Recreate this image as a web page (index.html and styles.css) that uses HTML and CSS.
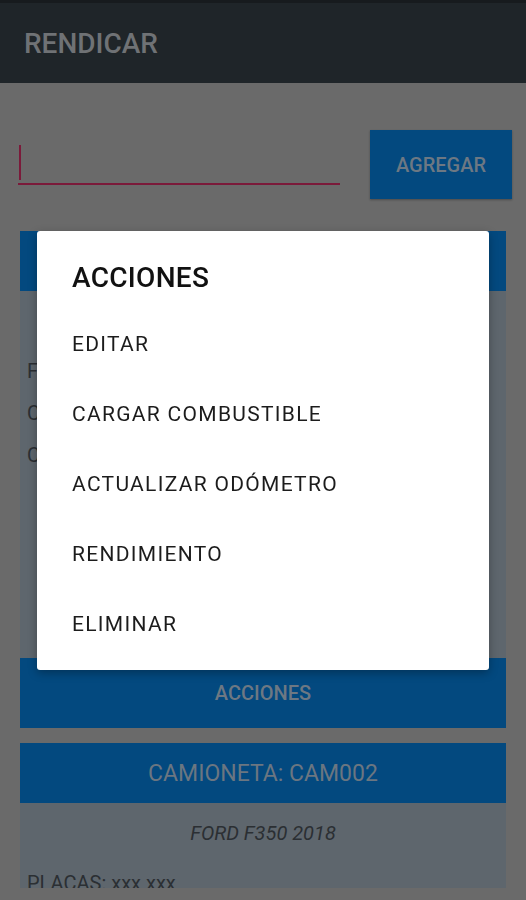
FILE: index.html
```html
<!DOCTYPE html>
<html lang="es">
<head>
    <meta charset="UTF-8">
    <meta name="viewport" content="width=device-width, initial-scale=1.0">
    <title>Rendicar</title>
    <link rel="stylesheet" href="styles.css">
</head>
<body>

<header class="appbar">
    <h1>RENDICAR</h1>
</header>

<main class="content">
    <div class="add-row">
        <div class="field"><span class="caret"></span></div>
        <button class="btn">AGREGAR</button>
    </div>

    <section class="card">
        <div class="card-head">CAMIONETA: CAM001</div>
        <div class="card-body tall">
            <p class="model">NISSAN NP300 2017</p>
            <p class="row">FECHA: 01/01/2019</p>
            <p class="row">COMBUSTIBLE: 0 L</p>
            <p class="row">CONSUMO: 0 KM/L</p>
        </div>
        <button class="card-action">ACCIONES</button>
    </section>

    <section class="card">
        <div class="card-head">CAMIONETA: CAM002</div>
        <div class="card-body">
            <p class="model">FORD F350 2018</p>
            <p class="row">PLACAS: xxx xxx</p>
            <p class="row">COMBUSTIBLE: DIESEL</p>
        </div>
        <button class="card-action">ACCIONES</button>
    </section>
</main>

<!-- dialogo de acciones abierto sobre la lista -->
<div class="dialog">
    <h2>ACCIONES</h2>
    <ul class="dialog-list">
        <li>EDITAR</li>
        <li>CARGAR COMBUSTIBLE</li>
        <li>ACTUALIZAR ODÓMETRO</li>
        <li>RENDIMIENTO</li>
        <li>ELIMINAR</li>
    </ul>
</div>

</body>
</html>
```

FILE: styles.css
```css
body {
    font-family: Roboto, "Liberation Sans", sans-serif;
    background-color: #6a6a6a;
    margin: 0;
    padding: 0;
    width: 526px;
    height: 900px;
    overflow: hidden;
}

.appbar {
    height: 83px;
    background-color: #1f2529;
    border-top: 3px solid #171b1e;
    box-sizing: border-box;
    display: flex;
    align-items: center;
    padding-left: 24px;
}

.appbar h1 {
    margin: 0;
    font-size: 28px;
    font-weight: 500;
    color: #6f7275;
}

.content {
    height: 805px;
    overflow: hidden;
}

.add-row {
    display: flex;
    align-items: flex-start;
    padding: 47px 14px 0 18px;
}

.field {
    width: 322px;
    height: 38px;
    margin-top: 15px;
    border-bottom: 2px solid #7b1a3a;
    position: relative;
    margin-right: 30px;
}

.caret {
    position: absolute;
    left: 1px;
    top: 0;
    width: 2px;
    height: 35px;
    background-color: #7b1a3a;
}

.btn {
    width: 142px;
    height: 69px;
    border: none;
    background-color: #03497f;
    color: #6d7883;
    font-family: inherit;
    font-size: 20px;
    font-weight: 500;
    padding: 0;
    box-shadow: 0 1px 2px rgba(0, 0, 0, 0.3);
}

.card {
    margin: 32px 20px 0 20px;
}

.card + .card {
    margin-top: 15px;
}

.card-head {
    height: 60px;
    background-color: #03497f;
    color: #6b7681;
    font-size: 23px;
    display: flex;
    align-items: center;
    justify-content: center;
}

.card-body {
    background-color: #5e666d;
    padding: 18px 7px 14px 7px;
    color: #2b2f33;
    font-size: 20px;
}

.card-body.tall {
    min-height: 367px;
    box-sizing: border-box;
}

.card-body p {
    margin: 0;
}

.card-body .model {
    text-align: center;
    font-style: italic;
    line-height: 24px;
    margin-bottom: 17px;
}

.card-body .row {
    line-height: 42px;
}

.card-action {
    display: block;
    width: 100%;
    height: 70px;
    border: none;
    background-color: #03497f;
    color: #6d7883;
    font-family: inherit;
    font-size: 20px;
    font-weight: 500;
    padding: 0;
}

.dialog {
    position: fixed;
    left: 37px;
    top: 231px;
    width: 452px;
    height: 439px;
    box-sizing: border-box;
    background-color: #ffffff;
    border-radius: 3px;
    box-shadow: 0 3px 10px rgba(0, 0, 0, 0.3);
    padding: 30px 35px 11px 35px;
}

.dialog h2 {
    margin: 0 0 14px 0;
    font-size: 28px;
    font-weight: 500;
    line-height: 34px;
    letter-spacing: 0.3px;
    color: #111;
}

.dialog-list {
    list-style: none;
    margin: 0;
    padding: 0;
}

.dialog-list li {
    height: 70px;
    display: flex;
    align-items: center;
    font-size: 21px;
    letter-spacing: 1.3px;
    color: #1c1c1c;
}
```
